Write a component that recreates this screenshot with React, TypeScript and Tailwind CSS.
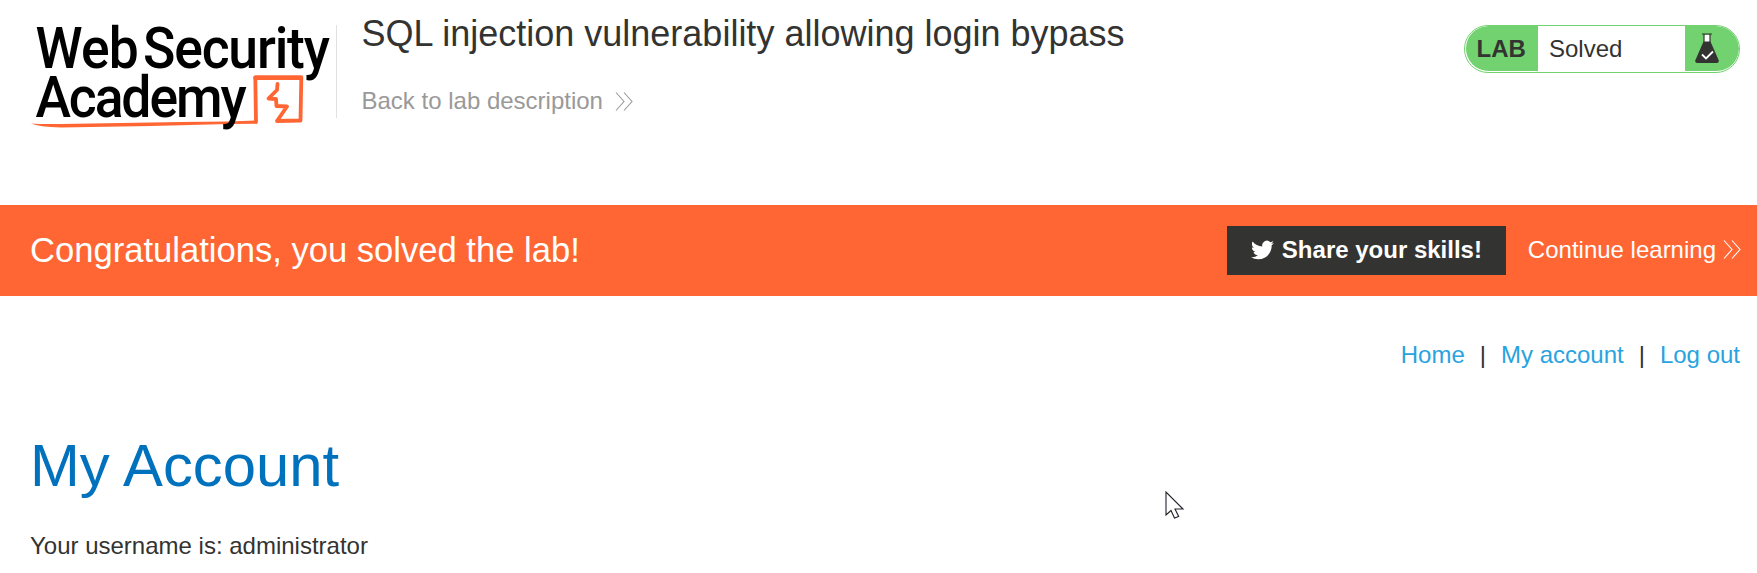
import React from "react";

function Chevrons({ className }: { className: string }) {
  return (
    <svg viewBox="0 0 18 19" className={className} fill="none" stroke="currentColor" strokeWidth="1.1">
      <path d="M1 .5l8 9-8 9M9 .5l8 9-8 9" />
    </svg>
  );
}

function Logo() {
  return (
    <svg viewBox="0 -12 304 130" className="h-[130px] w-[304px] shrink-0" fontFamily="Roboto, sans-serif" fontWeight="500">
      <g fill="none" stroke="#ff6633" strokeLinecap="round" strokeLinejoin="round">
        <path d="M225 101.500L224.300 57.500L270.300 58L269.500 100.500L246 101L256 86.500L245.500 86L245 79L237.500 78.500L246 70L246.500 64" strokeWidth="3.8" />
        <path d="M224.500 57.800L270 57.500" strokeWidth="4.500" />
      </g>
      <path d="M0 103.500Q8 104.200 30 104L150 102L198 101.500L226 100.500L226.500 103.800L198 104L120 106L30 107.500Q8 107 0 103.500Z" fill="#ff6633" />
      <g fill="#000" fontSize="57.500">
        <text transform="translate(4.500 48) scale(.93 1)" textLength="111" lengthAdjust="spacing">Web</text>
        <text transform="translate(112 48) scale(.93 1)" textLength="201" lengthAdjust="spacing">Security</text>
        <text transform="translate(4.500 97) scale(.93 1)" textLength="227" lengthAdjust="spacing">Academy</text>
      </g>
    </svg>
  );
}

function Flask() {
  return (
    <svg viewBox="0 0 24 31" className="h-[31px] w-6">
      <path d="M9 2h6v7H9z" fill="#fff" />
      <path d="M7 1h10M9 1v8M15 1v8" stroke="#333332" strokeWidth="1.2" fill="none" />
      <path d="M8.500 8.500h7L23.800 27.500q.3 2.500-2 2.500H2.200q-2.300 0-2-2.500z" fill="#333332" />
      <path d="M7 21.500l4 4 7-7" stroke="#fff" strokeWidth="1.8" fill="none" />
    </svg>
  );
}

function LabStatus() {
  return (
    <div className="mt-[25px] flex h-12 w-[276px] shrink-0 overflow-hidden rounded-full border border-[#72d26f] pb-px pl-px text-[24px]">
      <div className="flex w-[72px] items-center rounded-l-full bg-[#72d26f] pl-[10.500px] font-bold">LAB</div>
      <div className="flex flex-1 items-center pl-[11px]">Solved</div>
      <div className="flex w-[54px] items-center rounded-r-full bg-[#72d26f] pl-[10px]">
        <Flask />
      </div>
    </div>
  );
}

export default function App() {
  return (
    <div className="h-[573px] w-[1757px] overflow-hidden bg-white font-['Liberation_Sans',Arial,sans-serif] text-[24px] leading-[28px] text-[#333332]">
      <header className="flex h-[205px] items-start pr-[17px] pl-[31px]">
        <div className="pt-2">
          <Logo />
        </div>
        <div className="mt-[25px] ml-px h-[93px] w-px bg-[#e0e0e0]" />
        <div className="ml-[24.500px] flex-1 pt-[13px]">
          <h2 className="text-[36px] leading-[42px]">SQL injection vulnerability allowing login bypass</h2>
          <a className="mt-[32px] flex items-center text-[#999999]">
            Back to lab description
            <Chevrons className="ml-[12.500px] h-[19px] w-[18px]" />
          </a>
        </div>
        <LabStatus />
      </header>

      <section className="flex h-[91px] items-center bg-[#ff6633] pr-4 pl-[30px] text-white">
        <h4 className="flex-1 pb-0.5 text-[34.6px] leading-[40px]">Congratulations, you solved the lab!</h4>
        <button className="flex h-[49px] w-[279px] items-center bg-[#333332] pb-0.5 pl-6 font-bold">
          <svg viewBox="0 0 24 20" className="mr-2 h-5 w-[23px]" fill="#fff">
            <path d="M23.950 2.570a10 10 0 0 1-2.820.78 4.960 4.960 0 0 0 2.160-2.730c-.95.560-2 .960-3.130 1.190a4.920 4.920 0 0 0-8.380 4.480C7.690 6.090 4.070 4.130 1.640 1.160a4.820 4.820 0 0 0-.67 2.480c0 1.710.87 3.210 2.190 4.100a4.900 4.900 0 0 1-2.230-.62v.060a4.920 4.920 0 0 0 3.950 4.830 5 5 0 0 1-2.210.080 4.940 4.940 0 0 0 4.600 3.420A9.870 9.870 0 0 1 0 17.540 14 14 0 0 0 7.550 19.750c9.050 0 14-7.500 14-13.980l-.02-.63a9.940 9.940 0 0 0 2.460-2.550z" />
          </svg>
          Share your skills!
        </button>
        <a className="ml-[22px] flex items-center pb-0.5 whitespace-nowrap">
          Continue learning
          <Chevrons className="ml-[7px] h-[19px] w-[18px]" />
        </a>
      </section>

      <main className="px-[30px]">
        <nav className="-mr-[13px] flex justify-end pt-[45px]">
          <a className="text-[#29a3e0]">Home</a>
          <span className="mx-[15px]">|</span>
          <a className="text-[#29a3e0]">My account</a>
          <span className="mx-[15px]">|</span>
          <a className="text-[#29a3e0]">Log out</a>
        </nav>
        <h1 className="mt-[63px] text-[59.800px] leading-[68px] text-[#0071bd]">My Account</h1>
        <p className="mt-[32px]">Your username is: administrator</p>
      </main>

      <svg viewBox="0 0 20 29" className="absolute top-[491px] left-[1165px] h-[29px] w-5">
        <path d="M1 1v23l5-4.500 3.500 7.500 4.200-1.500-3.700-7.500h8z" fill="#fff" stroke="#22222c" strokeWidth="1.1" />
      </svg>
    </div>
  );
}
